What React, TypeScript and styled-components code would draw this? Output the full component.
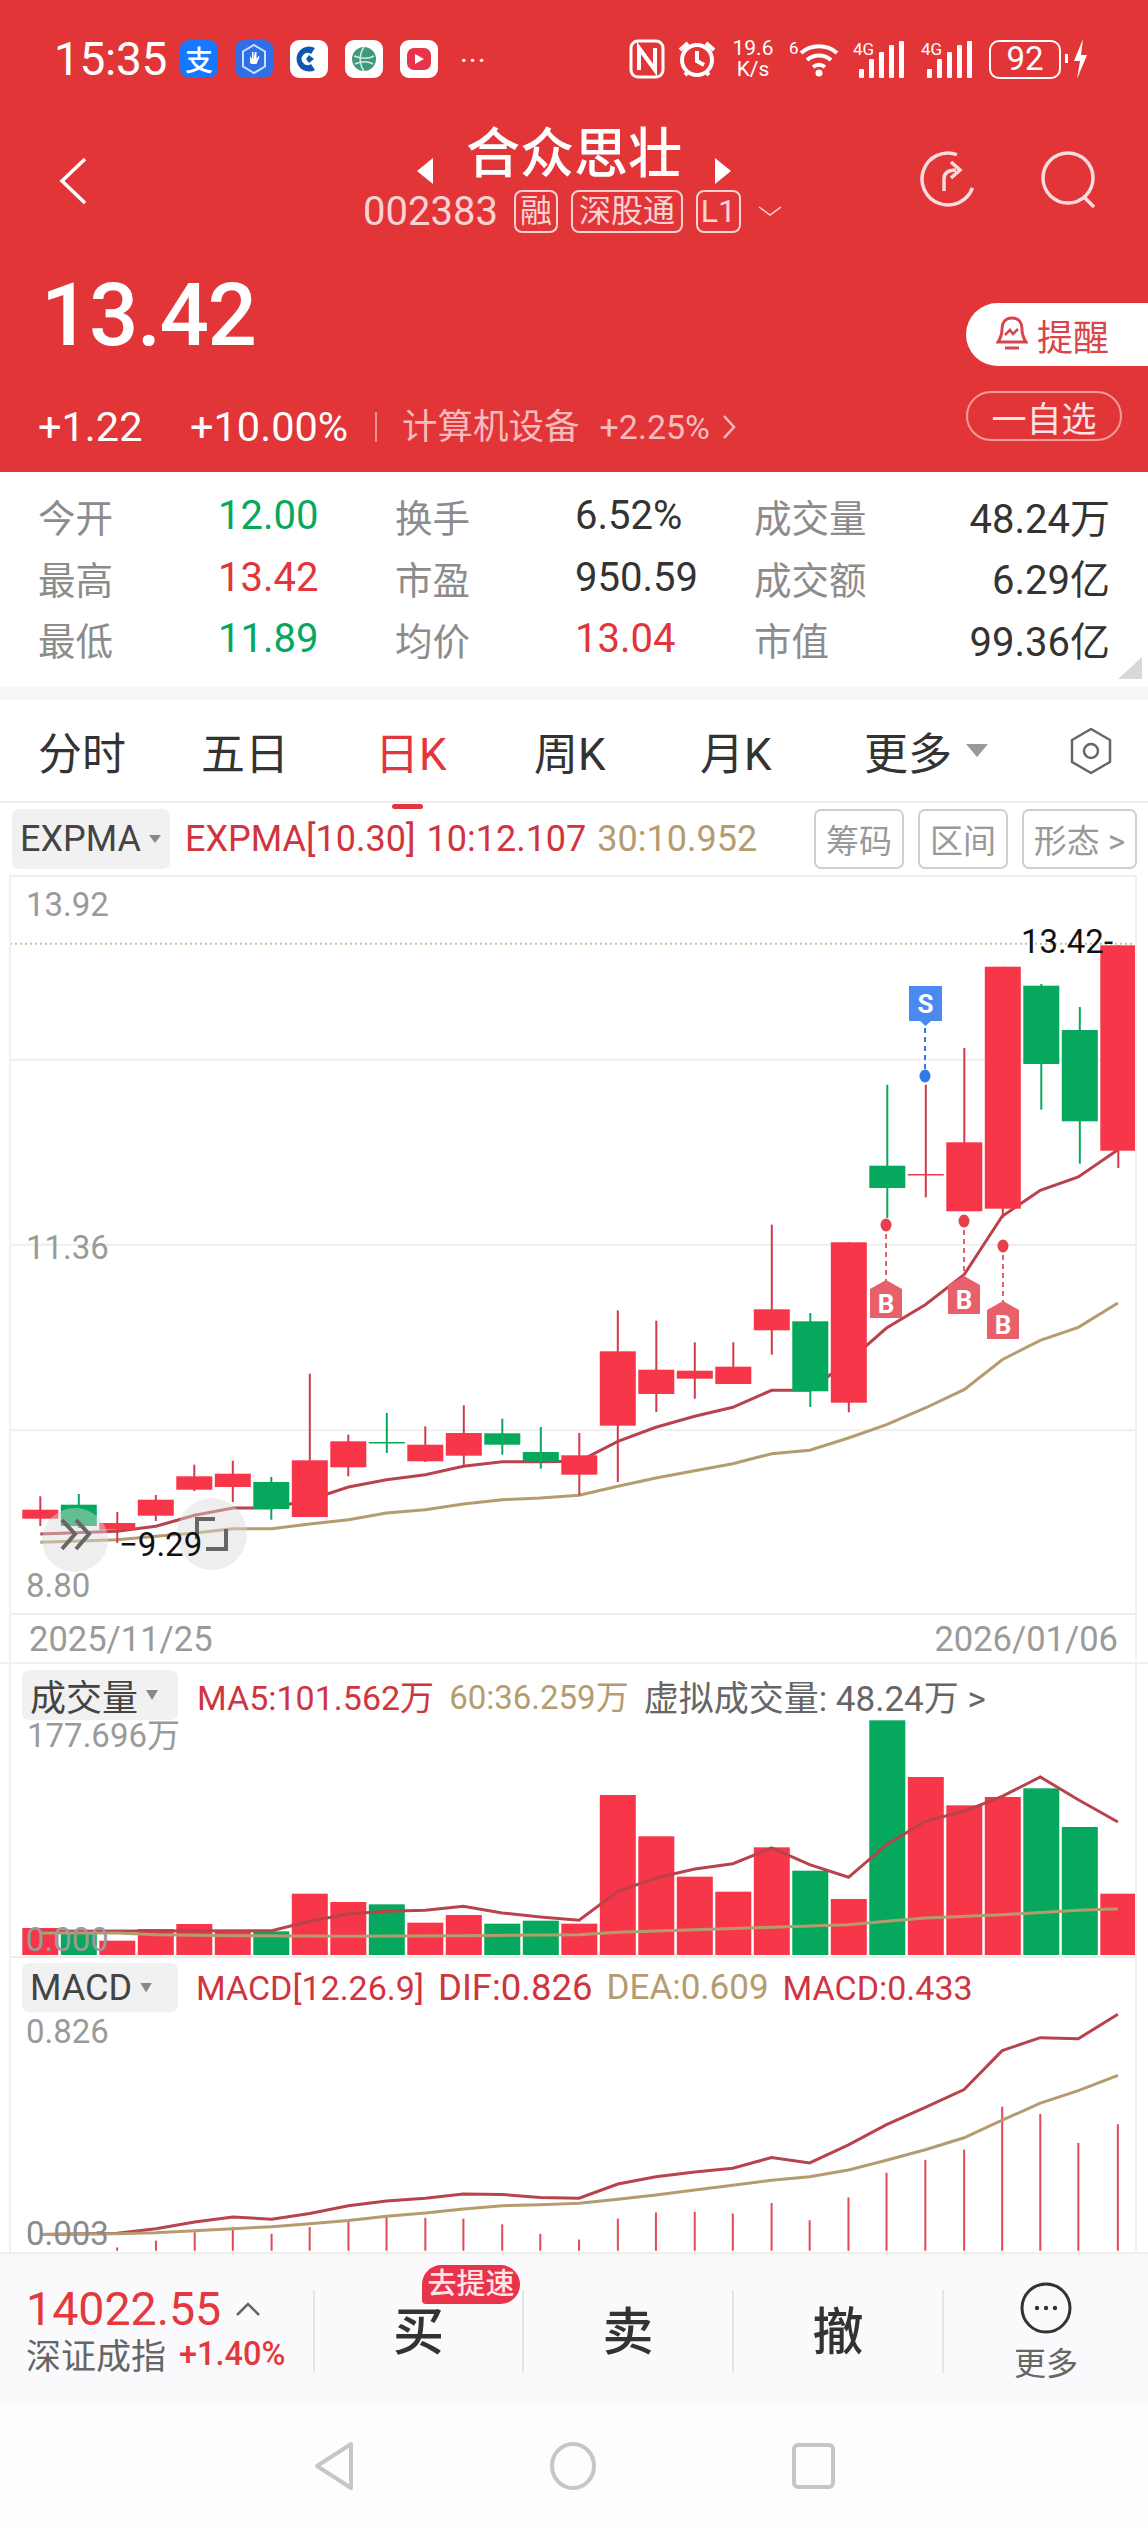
import { Fragment } from "react";
import styled, { createGlobalStyle } from "styled-components";

const GlobalStyle = createGlobalStyle`
  html, body {
    margin: 0;
    padding: 0;
    background: #fff;
    font-family: Roboto, "Noto Sans CJK SC", sans-serif;
  }
  * { box-sizing: border-box; }
`;

const RED = "#e23538";
const UP = "#f8364a";
const DOWN = "#05a85c";
const TAN = "#b59c6f";
const LINE_RED = "#b8434c";

const Page = styled.div`
  width: 1148px;
  height: 2532px;
  overflow: hidden;
  background: #fff;
  color: #333;
`;

/* ---- red header ---- */
const Header = styled.header`
  height: 472px;
  background: ${RED};
  color: #fff;
`;
const StatusBar = styled.div`
  height: 118px;
  display: flex;
  align-items: center;
  padding: 0 0 0 54px;
`;
const Clock = styled.span`
  font-size: 46px;
  width: 126px;
  letter-spacing: -0.3px;
`;
const AppIcons = styled.div`
  display: flex;
  gap: 17px;
  align-items: center;
`;
const AppTile = styled.div<{ $bg: string }>`
  width: 38px;
  height: 38px;
  border-radius: 9px;
  background: ${(p) => p.$bg};
  display: flex;
  align-items: center;
  justify-content: center;
  font-size: 28px;
  color: #fff;
  font-weight: 500;
`;
const Dots = styled.span`
  margin-left: 22px;
  font-size: 30px;
  line-height: 1;
  letter-spacing: 1px;
  transform: translateY(2px);
`;
const SysIcons = styled.div`
  margin-left: auto;
  margin-right: 59px;
  display: flex;
  align-items: center;
  gap: 12px;
`;
const NetSpeed = styled.div`
  font-size: 21px;
  line-height: 21px;
  text-align: center;
  width: 48px;
`;
const Battery = styled.div`
  width: 72px;
  height: 39px;
  border: 2.5px solid #fff;
  border-radius: 10px;
  font-size: 33px;
  line-height: 33px;
  text-align: center;
`;
const TitleBar = styled.div`
  height: 122px;
  display: grid;
  grid-template-columns: 1fr auto 1fr;
  align-items: center;
`;
const BackCell = styled.div`
  padding-left: 58px;
  display: flex;
  transform: translateY(2px);
`;
const TitleCell = styled.div`
  display: flex;
  flex-direction: column;
  align-items: center;
  gap: 4px;
`;
const TitleLine = styled.div`
  display: flex;
  align-items: center;
  gap: 31px;
  height: 60px;
`;
const TitleText = styled.div`
  font-size: 54px;
  line-height: 60px;
  font-weight: 500;
`;
const CodeLine = styled.div`
  display: flex;
  align-items: center;
  color: #f9d3d4;
  height: 44px;
  transform: translateX(-4px);
`;
const CodeText = styled.span`
  font-size: 40px;
  margin-right: 16px;
`;
const Tag = styled.span<{ $w: number }>`
  width: ${(p) => p.$w}px;
  height: 43px;
  margin-right: 13px;
  border: 2px solid #f9d3d4;
  border-radius: 8px;
  font-size: 32px;
  line-height: 38px;
  text-align: center;
  white-space: nowrap;
`;
const ActionCell = styled.div`
  display: flex;
  justify-content: flex-end;
  align-items: center;
  padding-right: 48px;
  gap: 62px;
`;
const QuoteBlock = styled.div`
  height: 232px;
  display: flex;
  justify-content: space-between;
`;
const QuoteLeft = styled.div`
  padding: 27px 0 0 38px;
  display: flex;
  flex-direction: column;
`;
const BigPrice = styled.div`
  font-size: 87px;
  line-height: 96px;
  font-weight: 500;
  letter-spacing: -1.5px;
  margin-left: 3px;
`;
const ChangeLine = styled.div`
  margin-top: 41px;
  display: flex;
  align-items: center;
  font-size: 41.5px;
  line-height: 46px;
`;
const ChangeValue = styled.span<{ $w: number }>`
  width: ${(p) => p.$w}px;
`;
const Sep = styled.i`
  display: block;
  width: 2px;
  height: 30px;
  margin-right: 25px;
  background: #ef8f90;
`;
const Sector = styled.span`
  font-size: 35.5px;
  color: #f6bcbd;
  margin-right: 20px;
`;
const SectorPct = styled.span`
  font-size: 34px;
  color: #f6bcbd;
  margin-right: 12px;
`;
const QuoteRight = styled.div`
  padding-top: 63px;
  width: 182px;
  display: flex;
  flex-direction: column;
`;
const RemindBtn = styled.div`
  height: 63px;
  border-radius: 32px 0 0 32px;
  background: #fff;
  color: #d8454a;
  display: flex;
  align-items: center;
  padding-left: 30px;
  gap: 9px;
  font-size: 36px;
`;
const WatchBtn = styled.div`
  margin-top: 25px;
  width: 156px;
  height: 50px;
  border: 2px solid #f19a9c;
  border-radius: 25px;
  display: flex;
  align-items: center;
  justify-content: center;
  font-size: 35px;
  color: #fbe3e3;
`;

/* ---- quote stats ---- */
const Stats = styled.section`
  position: relative;
  height: 215px;
  padding: 13px 38px 0 38px;
  display: grid;
  grid-template-columns: 180px 177px 180px 179px 180px 1fr;
  grid-auto-rows: 61.5px;
  align-items: center;
  font-size: 40px;
`;
const StatLabel = styled.span`
  color: #8c8c8c;
  font-size: 37.5px;
`;
const StatValue = styled.span<{ $c?: string; $right?: boolean }>`
  color: ${(p) => p.$c || "#333"};
  text-align: ${(p) => (p.$right ? "right" : "left")};
  white-space: nowrap;
`;
const Corner = styled.i`
  position: absolute;
  right: 6px;
  bottom: 8px;
  width: 24px;
  height: 22px;
  background: #d8d8d8;
  clip-path: polygon(100% 0, 100% 100%, 0 100%);
`;
const Band = styled.div`
  height: 13px;
  background: #f6f6f6;
`;

/* ---- period tabs ---- */
const Tabs = styled.nav`
  height: 103px;
  padding-left: 38px;
  display: grid;
  grid-template-columns: 163px 174px 159px 166px 164px 1fr auto;
  align-items: center;
  font-size: 44px;
  border-bottom: 2px solid #eee;
`;
const Tab = styled.div<{ $active?: boolean }>`
  position: relative;
  color: ${(p) => (p.$active ? "#e2353c" : "#333")};
  ${(p) =>
    p.$active &&
    `&::after {
      content: "";
      position: absolute;
      left: 17px;
      bottom: -26px;
      width: 31px;
      height: 5px;
      border-radius: 3px;
      background: #e2353c;
    }`}
`;
const MoreTab = styled.div`
  display: flex;
  align-items: center;
  gap: 14px;
`;
const SmallCaret = styled.i<{ $w?: number; $h?: number; $c?: string }>`
  display: block;
  width: ${(p) => p.$w || 22}px;
  height: ${(p) => p.$h || 13}px;
  background: ${(p) => p.$c || "#999"};
  clip-path: polygon(0 0, 100% 0, 50% 100%);
`;
const HexCell = styled.div`
  padding-right: 35px;
  display: flex;
`;

/* ---- chart toolbars ---- */
const ChartArea = styled.div`
  position: relative;
  &::before {
    content: "";
    position: absolute;
    left: 9px;
    right: 11px;
    top: 72px;
    bottom: 0;
    border-left: 2px solid #f1f1f1;
    border-right: 2px solid #f1f1f1;
    pointer-events: none;
  }
`;
const ChartBar = styled.div<{ $h: number; $top: number; $left: number; $fs: number; $gap: number }>`
  height: ${(p) => p.$h}px;
  padding-top: ${(p) => p.$top}px;
  display: flex;
  align-items: center;
  font-size: ${(p) => p.$fs}px;
  white-space: nowrap;
  gap: ${(p) => p.$gap}px;
  padding-left: ${(p) => p.$left}px;
`;
const Selector = styled.div<{ $w: number; $h: number; $fs: number }>`
  width: ${(p) => p.$w}px;
  height: ${(p) => p.$h}px;
  margin-right: 4px;
  background: #f1f1f1;
  border-radius: 7px;
  padding-left: 8px;
  display: flex;
  align-items: center;
  gap: 8px;
  font-size: ${(p) => p.$fs}px;
  color: #444;
`;
const Legend = styled.span<{ $c: string; $fs?: number }>`
  color: ${(p) => p.$c};
  ${(p) => p.$fs && `font-size: ${p.$fs}px;`}
`;
const TextBtns = styled.div`
  margin-left: auto;
  margin-right: 11px;
  display: flex;
  gap: 14px;
`;
const TextBtn = styled.div<{ $w: number }>`
  width: ${(p) => p.$w}px;
  height: 60px;
  border: 2px solid #cfcfcf;
  border-radius: 7px;
  color: #999;
  font-size: 33px;
  display: flex;
  align-items: center;
  justify-content: center;
`;
const ChartSvg = styled.svg`
  display: block;
  overflow: visible;
`;
const AxisText = styled.text<{ $c?: string; $fs?: number }>`
  fill: ${(p) => p.$c || "#9a9a9a"};
  font-size: ${(p) => p.$fs || 33}px;
  font-family: Roboto, "Noto Sans CJK SC", sans-serif;
`;
const MarkerText = styled.text`
  fill: #fff;
  font-size: 26px;
  font-weight: 700;
  font-family: Roboto, sans-serif;
  text-anchor: middle;
`;
const DateRow = styled.div`
  height: 49px;
  padding: 0 30px 0 29px;
  display: flex;
  justify-content: space-between;
  align-items: center;
  font-size: 34.5px;
  color: #9a9a9a;
  border-bottom: 2px solid #f1f1f1;
`;

/* ---- bottom trade bar ---- */
const TradeBar = styled.div`
  height: 150px;
  padding-top: 36px;
  background: #fafafc;
  border-top: 2px solid #eee;
  display: grid;
  grid-template-columns: 313px 209px 210px 210px 206px;
  align-items: start;
`;
const IndexCell = styled.div`
  padding-left: 26px;
  height: 83px;
`;
const IndexTop = styled.div`
  display: flex;
  align-items: center;
  height: 38px;
  gap: 15px;
  font-size: 46.5px;
  color: #e3383c;
`;
const IndexBottom = styled.div`
  margin-top: 0;
  display: flex;
  align-items: center;
  gap: 13px;
  font-size: 35px;
  color: #666;
  white-space: nowrap;
`;
const IndexPct = styled.span`
  font-size: 32.5px;
  font-weight: 500;
  color: #e3383c;
`;
const TradeCell = styled.div`
  position: relative;
  height: 83px;
  border-left: 2px solid #e6e6e6;
  display: flex;
  align-items: center;
  justify-content: center;
  font-size: 51px;
  font-weight: 500;
  color: #333;
`;
const TradeGlyph = styled.span`
  transform: translateY(-4px);
`;
const SpeedBadge = styled.div`
  position: absolute;
  left: 107px;
  top: -25px;
  width: 98px;
  height: 39px;
  border-radius: 20px 20px 20px 4px;
  background: #e8344a;
  color: #fde3e5;
  font-size: 29px;
  line-height: 39px;
  text-align: center;
  white-space: nowrap;
`;
const MoreCell = styled(TradeCell)`
  flex-direction: column;
  font-size: 32px;
  font-weight: 400;
  color: #666;
  gap: 4px;
  padding-top: 6px;
`;
const MoreIcon = styled.div`
  margin-top: -4px;
  display: flex;
`;
const NavBar = styled.div`
  height: 128px;
  background: #fdfdfd;
  display: flex;
  align-items: center;
  padding-left: 314px;
  gap: 195px;
`;

/* ---- chart data, page pixels ---- */
const cx = (i: number) => 40.3 + 38.5 * i;
// zoom readings -> page pixels
const pts = (list: number[][], off: number, sy: number) =>
  list.map(([x, y]) => `${(x / 1.366).toFixed(1)},${(off + y / sy).toFixed(1)}`).join(" ");

type Candle = [number, number, number, number, "u" | "d"];
const candles: Candle[] = [
  [1511.7, 1520.7, 1498.3, 1528, "u"],
  [1506.7, 1528, 1496, 1530, "d"],
  [1525, 1531.7, 1514, 1545, "u"],
  [1501.7, 1517.7, 1497, 1523, "u"],
  [1478.3, 1491.7, 1466.7, 1493, "u"],
  [1475.7, 1489, 1462.7, 1504, "u"],
  [1484, 1511, 1479, 1521.7, "d"],
  [1462.3, 1519, 1375.7, 1519, "u"],
  [1443.3, 1469.3, 1436.7, 1478.3, "u"],
  [1444, 1445.5, 1415, 1455, "d"],
  [1446.7, 1463.3, 1428.3, 1464, "u"],
  [1435, 1457.7, 1407.3, 1468.3, "u"],
  [1435.3, 1446.7, 1420.7, 1456.7, "d"],
  [1454, 1463.3, 1429, 1470.7, "d"],
  [1457.3, 1476.7, 1435, 1497.3, "u"],
  [1353.3, 1427.7, 1312.3, 1484, "u"],
  [1371.7, 1396, 1322.7, 1414, "u"],
  [1372.7, 1380.7, 1344.3, 1400.7, "u"],
  [1368.7, 1386, 1344.3, 1386, "u"],
  [1311.3, 1332.3, 1226.7, 1356.7, "u"],
  [1323.3, 1393.3, 1315, 1409, "d"],
  [1244.3, 1404.7, 1244.3, 1414.3, "u"],
  [1167.7, 1190, 1086.7, 1220, "d"],
  [1176, 1177.5, 1086.7, 1199.3, "u"],
  [1144.3, 1213.3, 1050, 1213, "u"],
  [968.7, 1210.7, 968.7, 1220, "u"],
  [987.7, 1066, 986, 1111.7, "d"],
  [1032, 1123.3, 1009, 1165.7, "d"],
  [947.3, 1152.7, 947, 1170, "u"],
];

const expmaFast = [
  [55, 768], [160, 760], [213, 745], [266, 712], [318, 690], [371, 690], [423, 665], [476, 627],
  [528, 605], [581, 590], [633, 565], [686, 551], [738, 551], [791, 550], [844, 490], [896, 448],
  [949, 415], [1001, 388], [1054, 337], [1106, 337], [1159, 250], [1211, 150], [1264, 80],
  [1317, -10], [1369, -185], [1421, -263], [1473, -303], [1527, -385],
];
const expmaSlow = [
  [55, 793], [160, 785], [213, 775], [266, 765], [318, 752], [371, 752], [423, 738], [476, 725],
  [528, 705], [581, 695], [633, 678], [686, 665], [738, 660], [791, 652], [844, 625], [896, 600],
  [949, 578], [1001, 557], [1054, 527], [1106, 517], [1159, 480], [1211, 440], [1264, 390],
  [1317, 335], [1369, 245], [1421, 187], [1473, 148], [1527, 75],
];

const volumes: [number, "u" | "d"][] = [
  [780, "u"], [790, "d"], [818, "u"], [783, "u"], [768, "u"], [788, "u"], [790, "d"], [677, "u"],
  [702, "u"], [709, "d"], [764, "u"], [741, "u"], [767, "d"], [758, "d"], [767, "u"], [381, "u"],
  [505, "u"], [626, "u"], [671, "u"], [538, "u"], [608, "d"], [693, "u"], [157, "d"], [327, "u"],
  [412, "u"], [387, "u"], [361, "d"], [477, "d"], [677, "u"],
];
const ma5 = [
  [55, 790], [371, 788], [423, 760], [476, 738], [528, 730], [581, 727], [633, 715], [686, 735],
  [738, 747], [791, 757], [844, 670], [896, 630], [949, 603], [1001, 587], [1054, 540], [1106, 590],
  [1159, 628], [1211, 530], [1264, 460], [1317, 430], [1369, 385], [1421, 327], [1473, 395], [1527, 462],
];
const ma60 = [
  [55, 795], [160, 795], [213, 800], [318, 803], [476, 805], [633, 803], [791, 800], [844, 793],
  [949, 785], [1054, 778], [1159, 770], [1211, 760], [1264, 750], [1369, 740], [1473, 727], [1527, 722],
];

const dif = [
  [55, 697], [160, 693], [213, 680], [266, 660], [318, 645], [371, 652], [423, 635], [476, 612],
  [528, 598], [581, 590], [633, 578], [686, 579], [738, 588], [791, 590], [844, 548], [896, 527],
  [949, 513], [1001, 502], [1054, 470], [1106, 486], [1159, 433], [1211, 373], [1264, 322], [1317, 270],
  [1369, 155], [1421, 117], [1473, 120], [1527, 48],
];
const dea = [
  [55, 697], [160, 695], [213, 692], [266, 686], [318, 680], [371, 674], [423, 665], [476, 656],
  [528, 643], [581, 634], [633, 622], [686, 612], [738, 609], [791, 605], [844, 593], [896, 581],
  [949, 566], [1001, 552], [1054, 537], [1106, 527], [1159, 507], [1211, 478], [1264, 447], [1317, 412],
  [1369, 360], [1421, 310], [1473, 273], [1527, 228],
];
const macdBars = [
  [160, 735], [213, 715], [266, 690], [318, 675], [371, 695], [423, 675], [476, 660], [528, 643],
  [581, 648], [633, 650], [686, 667], [738, 695], [791, 712], [844, 650], [896, 632], [949, 630],
  [1001, 635], [1054, 604], [1106, 655], [1159, 588], [1211, 515], [1264, 477], [1317, 447], [1369, 320],
  [1421, 342], [1473, 427], [1527, 372],
];

const stats = [
  ["今开", "12.00", DOWN, "换手", "6.52%", "#333", "成交量", "48.24万"],
  ["最高", "13.42", "#e2353c", "市盈", "950.59", "#333", "成交额", "6.29亿"],
  ["最低", "11.89", DOWN, "均价", "13.04", "#e2353c", "市值", "99.36亿"],
];

function BuyMarker({ x, dotY, boxY }: { x: number; dotY: number; boxY: number }) {
  return (
    <g>
      <line x1={x} x2={x} y1={dotY} y2={boxY} stroke="#e8606a" strokeWidth={2} strokeDasharray="5 4" />
      <ellipse cx={x} cy={dotY} rx={5.5} ry={6.5} fill="#e5404c" />
      <path d={`M${x - 16} ${boxY + 4}L${x} ${boxY - 5}L${x + 16} ${boxY + 4}V${boxY + 33}H${x - 16}Z`} fill="#e8606a" />
      <MarkerText x={x} y={boxY + 28}>
        B
      </MarkerText>
    </g>
  );
}

function MainChart() {
  return (
    <ChartSvg width={1148} height={740} viewBox="0 877 1148 740">
      <line x1={10} x2={1136} y1={878} y2={878} stroke="#eee" strokeWidth={2} />
      {[1061.7, 1246.7, 1432.3].map((y) => (
        <line key={y} x1={10} x2={1136} y1={y} y2={y} stroke="#eee" strokeWidth={2} />
      ))}
      <line x1={10} x2={1136} y1={945.7} y2={945.7} stroke="#cdbf9c" strokeWidth={2} strokeDasharray="2 3" />
      <line x1={10} x2={1136} y1={1616} y2={1616} stroke="#eee" strokeWidth={2} />

      <AxisText x={26} y={918}>13.92</AxisText>
      <AxisText x={26} y={1261}>11.36</AxisText>
      <AxisText x={26} y={1599}>8.80</AxisText>

      <polyline points={pts(expmaFast, 1280, 3)} fill="none" stroke={LINE_RED} strokeWidth={3} />
      <polyline points={pts(expmaSlow, 1280, 3)} fill="none" stroke={TAN} strokeWidth={3} />

      {candles.map(([top, bottom, wickTop, wickBottom, dir], i) => {
        const c = dir === "u" ? UP : DOWN;
        return (
          <g key={i}>
            <line x1={cx(i)} x2={cx(i)} y1={wickTop} y2={wickBottom} stroke={dir === "u" ? "#d23a48" : DOWN} strokeWidth={2} />
            <rect x={cx(i) - 18} y={top} width={36} height={bottom - top} fill={c} />
          </g>
        );
      })}

      {/* fold + range buttons */}
      <ellipse cx={75} cy={1542} rx={33} ry={32} fill="#d9d9d9" fillOpacity={0.45} />
      <path d="M62 1522l13 14-13 15M76 1522l13 14-13 15" fill="none" stroke="#666" strokeWidth={4} />
      <ellipse cx={212} cy={1536} rx={35} ry={36} fill="#d9d9d9" fillOpacity={0.45} />
      <path d="M197 1541v-20h18M226 1531v20h-20" fill="none" stroke="#666" strokeWidth={4} />
      <AxisText x={119} y={1558} $c="#111" $fs={33}>−9.29</AxisText>
      <AxisText x={1021} y={955} $c="#111" $fs={33}>13.42-</AxisText>

      <line x1={925} x2={925} y1={1030} y2={1078} stroke="#2f7ae5" strokeWidth={2} strokeDasharray="5 4" />
      <ellipse cx={925} cy={1078} rx={5.5} ry={6.5} fill="#2f7ae5" />
      <path d="M909 988h33v35h-11l-5.500 5-5.500-5h-11z" fill="#4a8af0" />
      <MarkerText x={925.500} y={1015}>S</MarkerText>

      <BuyMarker x={886} dotY={1227} boxY={1287} />
      <BuyMarker x={964} dotY={1223} boxY={1283} />
      <BuyMarker x={1003} dotY={1248} boxY={1308} />
    </ChartSvg>
  );
}

function VolumeChart() {
  const bottom = 1957;
  return (
    <ChartSvg width={1148} height={238} viewBox="0 1722 1148 238">
      <AxisText x={27} y={1749}>177.696万</AxisText>
      {volumes.map(([z, dir], i) => {
        const top = 1670 + z / 3;
        return <rect key={i} x={cx(i) - 18} y={top} width={36} height={bottom - top} fill={dir === "u" ? UP : DOWN} />;
      })}
      <polyline points={pts(ma5, 1670, 3)} fill="none" stroke={LINE_RED} strokeWidth={3} />
      <polyline points={pts(ma60, 1670, 3)} fill="none" stroke={TAN} strokeWidth={3} />
      <AxisText x={26} y={1953} $c="#9a9a9a">0.000</AxisText>
      <line x1={10} x2={1136} y1={1959} y2={1959} stroke="#eee" strokeWidth={2} />
    </ChartSvg>
  );
}

function MacdChart() {
  const sy = 2.947;
  const base = 2000 + 745 / sy;
  return (
    <ChartSvg width={1148} height={240} viewBox="0 2014 1148 240">
      <AxisText x={26} y={2045}>0.826</AxisText>
      {macdBars.map(([x, z]) => (
        <line key={x} x1={x / 1.366} x2={x / 1.366} y1={2000 + z / sy} y2={base} stroke="#e04a55" strokeWidth={2} />
      ))}
      <polyline points={pts(dif, 2000, sy)} fill="none" stroke={LINE_RED} strokeWidth={3} />
      <polyline points={pts(dea, 2000, sy)} fill="none" stroke={TAN} strokeWidth={3} />
      <AxisText x={26} y={2247} $c="#8a8a8a">0.003</AxisText>
    </ChartSvg>
  );
}

function SignalIcon() {
  return (
    <svg width={56} height={38} viewBox="0 0 56 38">
      <text x={0} y={15} fontSize={17} fill="#fff" fontFamily="Roboto, sans-serif">4G</text>
      {[0, 1, 2, 3, 4].map((b) => (
        <rect key={b} x={6 + b * 10} y={b === 4 ? 1 : 26 - b * 7 - (b === 0 ? -3 : 0)} width={5} height={b === 4 ? 37 : 12 + b * 7 - (b === 0 ? 3 : 0)} rx={1} fill="#fff" />
      ))}
    </svg>
  );
}

export default function App() {
  return (
    <Page>
      <GlobalStyle />
      <Header>
        <StatusBar>
          <Clock>15:35</Clock>
          <AppIcons>
            <AppTile $bg="#1677ff">支</AppTile>
            <AppTile $bg="#2f6fe8">
              <svg width={28} height={32} viewBox="0 0 28 32">
                <path d="M14 2l11 6.500v15L14 30 3 23.500v-15z" fill="none" stroke="#cfe0ff" strokeWidth={2} />
                <path d="M10 20v-7l2 3v-7h1.500v6L15 9h1.500v7l2-3 1 1-3 7h-5z" fill="#fff" />
              </svg>
            </AppTile>
            <AppTile $bg="#fff">
              <svg width={30} height={30} viewBox="0 0 30 30">
                <path d="M21 4a12.500 12.500 0 1 0 0 22l-4-6a6 6 0 1 1 0-10z" fill="#0e56b0" />
                <path d="M15 11l5 4-5 4-3-4z" fill="#0e56b0" />
              </svg>
            </AppTile>
            <AppTile $bg="#fff">
              <svg width={28} height={28} viewBox="0 0 28 28">
                <circle cx={14} cy={14} r={12} fill="#3f9a7d" />
                <path d="M4 11c8 3 15 3 20 0M5 19c7-3 13-3 18 0M14 2c-5 7-5 17 0 24" fill="none" stroke="#d8ece4" strokeWidth={1.500} />
              </svg>
            </AppTile>
            <AppTile $bg="#fff">
              <svg width={28} height={28} viewBox="0 0 28 28">
                <rect x={2} y={3} width={24} height={22} rx={7} fill="#e8344a" />
                <path d="M10 9l9 5-9 5z" fill="#fff" />
              </svg>
            </AppTile>
          </AppIcons>
          <Dots>···</Dots>
          <SysIcons>
            <svg width={36} height={40} viewBox="0 0 36 40">
              <rect x={2} y={2} width={32} height={36} rx={7} fill="none" stroke="#fff" strokeWidth={3} />
              <path d="M10 31V9l16 22V9" fill="none" stroke="#fff" strokeWidth={4} />
            </svg>
            <svg width={40} height={40} viewBox="0 0 40 40">
              <circle cx={20} cy={21} r={15} fill="none" stroke="#fff" strokeWidth={4} />
              <path d="M20 12v10l7 4M3 11l8-7M37 11l-8-7M8 36l4-4M32 36l-4-4" fill="none" stroke="#fff" strokeWidth={4} />
            </svg>
            <NetSpeed>
              19.6
              <br />
              K/s
            </NetSpeed>
            <svg width={52} height={40} viewBox="0 0 52 40">
              <text x={0} y={15} fontSize={17} fill="#fff" fontFamily="Roboto, sans-serif">6</text>
              <path d="M12 14c10-9 26-9 36 0M18 21c7-6 17-6 24 0M24 28c4-3 8-3 12 0" fill="none" stroke="#fff" strokeWidth={4} />
              <circle cx={30} cy={34} r={3.500} fill="#fff" />
            </svg>
            <SignalIcon />
            <SignalIcon />
            <Battery>92</Battery>
            <svg width={24} height={44} viewBox="0 0 24 44" style={{ marginLeft: -8 }}>
              <rect x={0} y={17} width={3} height={9} fill="#fff" />
              <path d="M18 2L9 24h6l-3 18 10-24h-6z" fill="#fff" />
            </svg>
          </SysIcons>
        </StatusBar>
        <TitleBar>
          <BackCell>
            <svg width={30} height={50} viewBox="0 0 30 50">
              <path d="M27 3L4 25l23 22" fill="none" stroke="#fff" strokeWidth={3.500} />
            </svg>
          </BackCell>
          <TitleCell>
            <TitleLine>
              <svg width={20} height={26} viewBox="0 0 20 26" style={{ marginTop: 32 }}>
                <path d="M18 0v26L2 13z" fill="#fff" />
              </svg>
              <TitleText>合众思壮</TitleText>
              <svg width={20} height={26} viewBox="0 0 20 26" style={{ marginTop: 32 }}>
                <path d="M2 0v26l16-13z" fill="#fff" />
              </svg>
            </TitleLine>
            <CodeLine>
              <CodeText>002383</CodeText>
              <Tag $w={44}>融</Tag>
              <Tag $w={112}>深股通</Tag>
              <Tag $w={45}>L1</Tag>
              <svg width={26} height={12} viewBox="0 0 26 12" style={{ marginLeft: 3, marginRight: -6 }}>
                <path d="M2 2l11 8L24 2" fill="none" stroke="#f9d3d4" strokeWidth={1.500} />
              </svg>
            </CodeLine>
          </TitleCell>
          <ActionCell>
            <svg width={60} height={60} viewBox="0 0 60 60">
              <path d="M30 4a26 26 0 1 0 26 26" fill="none" stroke="#fbdcdc" strokeWidth={3.500} transform="rotate(20 30 30)" />
              <path d="M26 42V30c0-6 4-9 12-9M33 13l9 8-9 8" fill="none" stroke="#fbdcdc" strokeWidth={3.500} />
            </svg>
            <svg width={60} height={60} viewBox="0 0 60 60">
              <circle cx={28} cy={29} r={25} fill="none" stroke="#fbdcdc" strokeWidth={3.500} />
              <path d="M44 48l10 10" fill="none" stroke="#fbdcdc" strokeWidth={3.500} />
            </svg>
          </ActionCell>
        </TitleBar>
        <QuoteBlock>
          <QuoteLeft>
            <BigPrice>13.42</BigPrice>
            <ChangeLine>
              <ChangeValue $w={152}>+1.22</ChangeValue>
              <ChangeValue $w={185}>+10.00%</ChangeValue>
              <Sep />
              <Sector>计算机设备</Sector>
              <SectorPct>+2.25%</SectorPct>
              <svg width={14} height={26} viewBox="0 0 14 26">
                <path d="M2 2l10 11L2 24" fill="none" stroke="#f6bcbd" strokeWidth={2.500} />
              </svg>
            </ChangeLine>
          </QuoteLeft>
          <QuoteRight>
            <RemindBtn>
              <svg width={32} height={40} viewBox="0 0 32 40">
                <path d="M16 3c-7 0-10 5-10 11 0 7-2 10-4 13h28c-2-3-4-6-4-13 0-6-3-11-10-11zM9 33h14" fill="none" stroke="#d8454a" strokeWidth={3} />
                <path d="M9 20l5-5 3 4 5-5" fill="none" stroke="#d8454a" strokeWidth={2.500} />
              </svg>
              提醒
            </RemindBtn>
            <WatchBtn>一自选</WatchBtn>
          </QuoteRight>
        </QuoteBlock>
      </Header>

      <Stats>
        {stats.map((r) => (
          <Fragment key={r[0]}>
            <StatLabel>{r[0]}</StatLabel>
            <StatValue $c={r[2]}>{r[1]}</StatValue>
            <StatLabel>{r[3]}</StatLabel>
            <StatValue $c={r[5]}>{r[4]}</StatValue>
            <StatLabel>{r[6]}</StatLabel>
            <StatValue $right>{r[7]}</StatValue>
          </Fragment>
        ))}
        <Corner />
      </Stats>
      <Band />

      <Tabs>
        <Tab>分时</Tab>
        <Tab>五日</Tab>
        <Tab $active>日K</Tab>
        <Tab>周K</Tab>
        <Tab>月K</Tab>
        <MoreTab>
          更多
          <SmallCaret />
        </MoreTab>
        <HexCell>
          <svg width={44} height={48} viewBox="0 0 44 48">
            <path d="M22 2l19 11v22L22 46 3 35V13z" fill="none" stroke="#666" strokeWidth={2.500} strokeLinejoin="round" />
            <circle cx={22} cy={24} r={7} fill="none" stroke="#666" strokeWidth={2.500} />
          </svg>
        </HexCell>
      </Tabs>

      <ChartArea>
        <ChartBar $h={72} $top={0} $left={12} $fs={36} $gap={11}>
          <Selector $w={158} $h={60} $fs={36}>
            EXPMA
            <SmallCaret $w={12} $h={8} $c="#888" />
          </Selector>
          <Legend $c="#d0343e">EXPMA[10.30]</Legend>
          <Legend $c="#d0343e">10:12.107</Legend>
          <Legend $c={TAN}>30:10.952</Legend>
          <TextBtns>
            <TextBtn $w={90}>筹码</TextBtn>
            <TextBtn $w={90}>区间</TextBtn>
            <TextBtn $w={115}>形态 &gt;</TextBtn>
          </TextBtns>
        </ChartBar>
        <MainChart />
        <DateRow>
          <span>2025/11/25</span>
          <span>2026/01/06</span>
        </DateRow>
        <ChartBar $h={56} $top={6} $left={22} $fs={34} $gap={15}>
          <Selector $w={156} $h={50} $fs={36}>
            成交量
            <SmallCaret $w={12} $h={10} $c="#888" />
          </Selector>
          <Legend $c="#d0343e">MA5:101.562万</Legend>
          <Legend $c={TAN} $fs={33}>60:36.259万</Legend>
          <Legend $c="#666" $fs={35}>虚拟成交量: 48.24万 &gt;</Legend>
        </ChartBar>
        <VolumeChart />
        <ChartBar $h={54} $top={5} $left={22} $fs={34} $gap={14}>
          <Selector $w={156} $h={49} $fs={36}>
            MACD
            <SmallCaret $w={12} $h={10} $c="#888" />
          </Selector>
          <Legend $c="#d0343e">MACD[12.26.9]</Legend>
          <Legend $c="#d0343e" $fs={36.5}>DIF:0.826</Legend>
          <Legend $c={TAN} $fs={35}>DEA:0.609</Legend>
          <Legend $c="#d0343e">MACD:0.433</Legend>
        </ChartBar>
        <MacdChart />
      </ChartArea>

      <TradeBar>
        <IndexCell>
          <IndexTop>
            14022.55
            <svg width={24} height={14} viewBox="0 0 24 14">
              <path d="M1 13L12 2l11 11" fill="none" stroke="#666" strokeWidth={2.500} />
            </svg>
          </IndexTop>
          <IndexBottom>
            深证成指
            <IndexPct>+1.40%</IndexPct>
          </IndexBottom>
        </IndexCell>
        <TradeCell>
          <TradeGlyph>买</TradeGlyph>
          <SpeedBadge>去提速</SpeedBadge>
        </TradeCell>
        <TradeCell>
          <TradeGlyph>卖</TradeGlyph>
        </TradeCell>
        <TradeCell>
          <TradeGlyph>撤</TradeGlyph>
        </TradeCell>
        <MoreCell>
          <MoreIcon>
            <svg width={52} height={52} viewBox="0 0 52 52">
              <circle cx={26} cy={26} r={24} fill="none" stroke="#333" strokeWidth={3} />
              <circle cx={17} cy={26} r={2.200} fill="#333" />
              <circle cx={26} cy={26} r={2.200} fill="#333" />
              <circle cx={35} cy={26} r={2.200} fill="#333" />
            </svg>
          </MoreIcon>
          更多
        </MoreCell>
      </TradeBar>

      <NavBar>
        <svg width={40} height={50} viewBox="0 0 40 50">
          <path d="M37 3v44L3 25z" fill="none" stroke="#c6c6c6" strokeWidth={4} strokeLinejoin="round" />
        </svg>
        <svg width={48} height={50} viewBox="0 0 48 50">
          <ellipse cx={24} cy={25} rx={21} ry={22} fill="none" stroke="#c6c6c6" strokeWidth={4} />
        </svg>
        <svg width={43} height={46} viewBox="0 0 43 46">
          <rect x={2} y={2} width={39} height={42} rx={4} fill="none" stroke="#c6c6c6" strokeWidth={4} />
        </svg>
      </NavBar>
    </Page>
  );
}
